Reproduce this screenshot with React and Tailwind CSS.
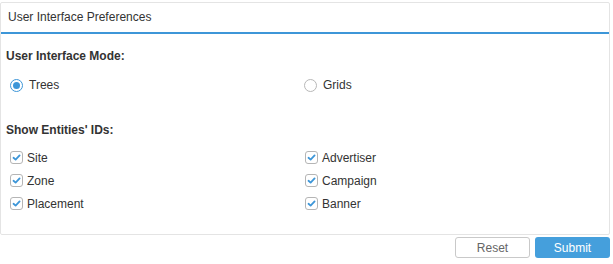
import React, { useState } from "react";

const Radio = ({ checked, label, onClick }) => (
  <label className="flex items-center gap-[6px] cursor-pointer" onClick={onClick}>
    <span
      className={`w-[13px] h-[13px] rounded-full border flex items-center justify-center bg-white ${
        checked ? "border-[#3d96d8]" : "border-[#b8b8b8]"
      }`}
    >
      {checked && <span className="w-[7px] h-[7px] rounded-full bg-[#3d96d8]" />}
    </span>
    <span>{label}</span>
  </label>
);

const Check = ({ checked, label, onClick }) => (
  <label className="flex items-center gap-[4px] cursor-pointer" onClick={onClick}>
    <span className="w-[13px] h-[13px] rounded-[3px] border border-[#b5b5b5] bg-white flex items-center justify-center">
      {checked && (
        <svg width="9" height="9" viewBox="0 0 9 9">
          <path d="M1.5 4.8 L3.6 6.6 L7.6 2.4" stroke="#3d96d8" strokeWidth="1.8" fill="none" strokeLinecap="round" strokeLinejoin="round" />
        </svg>
      )}
    </span>
    <span>{label}</span>
  </label>
);

export default function App() {
  const [mode, setMode] = useState("trees");
  const [ids, setIds] = useState({
    Site: true,
    Advertiser: true,
    Zone: true,
    Campaign: true,
    Placement: true,
    Banner: true,
  });

  const toggle = (k) => setIds({ ...ids, [k]: !ids[k] });

  return (
    <div className="w-[613px] h-[264px] bg-white text-[12px] text-[#333] font-['Liberation_Sans',Arial,sans-serif] pt-[2px]">
      <div className="w-[610px] border border-[#e4e4e4] rounded-[2px]">
        <div className="h-[31px] flex items-center pl-[7px] pb-[2px] text-[12px] border-b-2 border-[#3d96d8]">
          User Interface Preferences
        </div>
        <div className="pt-[14px] pb-[19px] leading-[16px]">
          <div className="pl-[5px] font-bold">User Interface Mode:</div>
          <div className="grid grid-cols-[294px_1fr] pl-[9px] mt-[13px]">
            <Radio checked={mode === "trees"} label="Trees" onClick={() => setMode("trees")} />
            <Radio checked={mode === "grids"} label="Grids" onClick={() => setMode("grids")} />
          </div>
          <div className="pl-[5px] font-bold mt-[29px]">Show Entities' IDs:</div>
          <div className="grid grid-cols-[295px_1fr] pl-[9px] mt-[8px]">
            {["Site", "Advertiser", "Zone", "Campaign", "Placement", "Banner"].map((k) => (
              <div key={k} className="h-[23px] flex items-center">
                <Check checked={ids[k]} label={k} onClick={() => toggle(k)} />
              </div>
            ))}
          </div>
        </div>
      </div>
      <div className="w-[610px] flex justify-end gap-[5px] mt-[2px]">
        <button className="w-[75px] h-[21px] border border-[#c9c9c9] rounded-[3px] bg-white text-[#666] text-[12px]">
          Reset
        </button>
        <button className="w-[75px] h-[21px] rounded-[3px] bg-[#459fdc] text-white text-[12px]">
          Submit
        </button>
      </div>
    </div>
  );
}
